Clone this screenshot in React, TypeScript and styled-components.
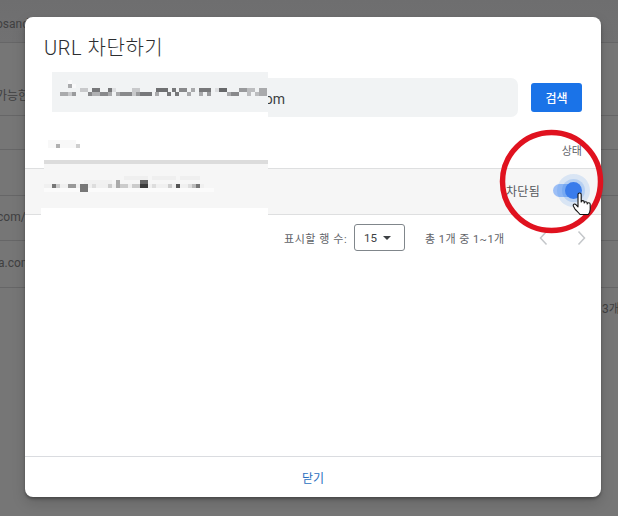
import React from "react";
import styled, { createGlobalStyle } from "styled-components";

const Global = createGlobalStyle`
  html, body { margin: 0; padding: 0; width: 618px; height: 516px; overflow: hidden; background: #767676; }
  * { box-sizing: border-box; }
  body { font-family: Roboto, "Noto Sans CJK KR", sans-serif; }
`;

const Page = styled.div`
  position: relative;
  width: 618px;
  height: 516px;
  overflow: hidden;
  background: #767676;
  display: flex;
  flex-direction: column;
`;

const BackRow = styled.div<{ $h: number; $top?: boolean; $pb?: number }>`
  height: ${(p) => p.$h}px;
  flex: none;
  border-bottom: 1px solid #666667;
  background: ${(p) => (p.$top ? "linear-gradient(#6e6e6f, #717172)" : "#767676")};
  padding-bottom: ${(p) => p.$pb ?? 9}px;
  display: flex;
  align-items: flex-end;
  color: #404041;
  font-size: 12px;
  line-height: 20px;
  white-space: nowrap;
`;

const BackText = styled.span<{ $x: number }>`
  margin-left: ${(p) => p.$x}px;
`;

const BackFoot = styled.div`
  padding: 12px 0 0 602px;
  color: #404041;
  font-size: 12px;
  line-height: 18px;
  white-space: nowrap;
`;

const Modal = styled.div`
  position: absolute;
  left: 25px;
  top: 17px;
  width: 576px;
  height: 480px;
  background: #fff;
  border-radius: 8px;
  display: flex;
  flex-direction: column;
  box-shadow: 0 2px 3px rgba(0, 0, 0, 0.3), 0 6px 14px rgba(0, 0, 0, 0.15);
`;

const Title = styled.h2`
  margin: 0;
  height: 61px;
  padding: 19px 19px 0;
  font-size: 20px;
  line-height: 24px;
  font-weight: 300;
  letter-spacing: 0.55px;
  color: #2c2d30;
  font-family: Roboto, "Noto Sans CJK KR", sans-serif;
`;

const SearchRow = styled.div`
  display: flex;
  align-items: center;
  gap: 13px;
  padding: 0 19px;
  flex: none;
`;

const SearchBox = styled.div`
  flex: 1;
  height: 39px;
  background: #f1f3f4;
  border-radius: 7px;
  display: flex;
  align-items: center;
  justify-content: flex-end;
  padding: 2px 233px 0 0;
  font-size: 14px;
  color: #3c4043;
`;

const SearchButton = styled.button`
  width: 51px;
  height: 29px;
  border: 0;
  border-radius: 3px;
  background: #1a73e8;
  color: #fff;
  font-family: inherit;
  font-size: 12px;
  font-weight: 500;
  padding: 0;
`;

const TableHead = styled.div`
  height: 52px;
  flex: none;
  display: flex;
  justify-content: flex-end;
  align-items: flex-end;
  padding: 0 19px 8px 0;
  border-bottom: 1px solid #dedfe0;
  font-size: 11px;
  line-height: 16px;
  color: #5f6368;
`;

const TableRow = styled.div`
  height: 46px;
  flex: none;
  display: flex;
  justify-content: flex-end;
  align-items: center;
  gap: 13px;
  padding: 0 20px 2px 0;
  background: #f6f6f6;
  border-bottom: 1px solid #dedfe0;
  font-size: 12px;
  color: #55585c;
`;

const StatusText = styled.span`
  letter-spacing: 0.3px;
`;

const Track = styled.div`
  position: relative;
  width: 28px;
  height: 13px;
  border-radius: 7px;
  background: #9dbff6;
`;

const Thumb = styled.div`
  position: absolute;
  left: 12px;
  top: -2px;
  width: 17px;
  height: 17px;
  border-radius: 50%;
  background: #3a7ceb;
  box-shadow: 0 0 0 3px rgba(26, 115, 232, 0.18), 0 0 0 8px rgba(26, 115, 232, 0.13);
`;

const Pager = styled.div`
  display: flex;
  align-items: center;
  height: 45px;
  padding-left: 259px;
  flex: none;
  font-size: 11px;
  color: #5f6368;
  white-space: nowrap;
`;

const PagerLabel = styled.span`
  width: 70px;
  letter-spacing: 0.55px;
`;

const RowsSelect = styled.div`
  width: 51px;
  height: 27px;
  border: 1px solid #80868b;
  border-radius: 3px;
  display: flex;
  align-items: center;
  gap: 6px;
  padding-left: 9px;
  font-size: 11.5px;
  color: #3c4043;
`;

const Caret = styled.span`
  width: 0;
  height: 0;
  border-left: 4.5px solid transparent;
  border-right: 4.5px solid transparent;
  border-top: 4.5px solid #3c4043;
`;

const Range = styled.span`
  margin-left: 20px;
  width: 112px;
  letter-spacing: 0.45px;
`;

const PageIcons = styled.div`
  display: flex;
  gap: 27px;
  color: #c4c7ca;
`;

const Spacer = styled.div`
  flex: 1;
`;

const Footer = styled.div`
  height: 41px;
  flex: none;
  border-top: 1px solid #dadce0;
  display: flex;
  align-items: center;
  justify-content: center;
  font-size: 12px;
  color: #2a6fc0;
`;

const Redaction = styled.svg`
  position: absolute;
  left: 0;
  top: 0;
  pointer-events: none;
`;

const Mark = styled.svg`
  position: absolute;
  left: 0;
  top: 0;
  overflow: visible;
  pointer-events: none;
`;

type Cell = [number, number, number, string];

const cells: Cell[] = [
  [68, 80, 4, "#f9f9fa"], [72, 84, 4, "#f9f9fa"],
  [68, 84, 4, "#aaabad"],
  [80, 88, 8, "#c8c9cb"], [92, 88, 8, "#77787a"], [108, 88, 4, "#77787a"], [112, 88, 4, "#dddee0"],
  [132, 88, 8, "#c8c9cb"], [156, 88, 12, "#6f7072"], [172, 88, 4, "#77787a"], [179, 88, 8, "#88898b"],
  [191, 88, 4, "#a9aaac"], [199, 88, 12, "#77787a"], [215, 88, 4, "#dddee0"], [219, 88, 8, "#67686a"],
  [239, 88, 8, "#999a9c"], [247, 88, 8, "#bcbdbf"], [259, 88, 8, "#a9aaac"],
  [60, 92, 8, "#a9aaac"], [68, 92, 4, "#c8c9cb"], [72, 92, 4, "#999a9c"], [88, 92, 4, "#88898b"],
  [92, 92, 8, "#b0b1b3"], [100, 92, 8, "#88898b"], [108, 92, 4, "#a9aaac"], [116, 92, 4, "#a9aaac"],
  [120, 92, 12, "#88898b"], [132, 92, 4, "#c8c9cb"], [136, 92, 4, "#999a9c"], [140, 92, 12, "#77787a"],
  [155, 92, 4, "#a9aaac"], [167, 92, 4, "#77787a"], [175, 92, 4, "#77787a"], [187, 92, 4, "#a9aaac"],
  [199, 92, 4, "#a9aaac"], [207, 92, 4, "#999a9c"], [227, 92, 4, "#a9aaac"], [231, 92, 8, "#88898b"],
  [247, 92, 4, "#bcbdbf"], [255, 92, 4, "#bcbdbf"], [259, 92, 8, "#a9aaac"],
  [48, 140, 28, "#f8f8f8"], [48, 144, 32, "#f8f8f8"], [56, 144, 4, "#b0b0b0"], [76, 144, 4, "#cfcfcf"],
  [84, 180, 28, "#f1f1f1"], [124, 176, 24, "#efefef"], [152, 176, 24, "#efefef"], [180, 176, 20, "#efefef"],
  [44, 188, 170, "#fbfbfb"],
  [116, 180, 4, "#aaaaaa"], [140, 180, 8, "#666666"],
  [44, 184, 160, "#f0f0f0"],
  [52, 184, 4, "#777777"], [56, 184, 4, "#cccccc"], [68, 184, 8, "#999999"], [80, 184, 8, "#777777"],
  [92, 184, 4, "#dddddd"], [108, 184, 4, "#cccccc"], [116, 184, 4, "#aaaaaa"], [120, 184, 8, "#cccccc"],
  [132, 184, 8, "#cccccc"], [140, 184, 8, "#3c3c3c"], [152, 184, 4, "#dddddd"], [168, 184, 4, "#cccccc"],
  [176, 184, 4, "#555555"], [188, 184, 4, "#dddddd"], [192, 184, 4, "#bbbbbb"], [196, 184, 4, "#777777"],
  [80, 188, 8, "#777777"],
];

export default function App() {
  return (
    <Page>
      <Global />
      <BackRow $h={43} $top $pb={8}><BackText $x={-4}>osand</BackText></BackRow>
      <BackRow $h={73}><BackText $x={-4}>가능한</BackText></BackRow>
      <BackRow $h={34} />
      <BackRow $h={46} />
      <BackRow $h={45} $pb={13}><BackText $x={-3}>com/</BackText></BackRow>
      <BackRow $h={47} $pb={14}><BackText $x={-2}>a.com</BackText></BackRow>
      <BackFoot>3개</BackFoot>

      <Modal>
        <Title>URL 차단하기</Title>
        <SearchRow>
          <SearchBox>.com</SearchBox>
          <SearchButton>검색</SearchButton>
        </SearchRow>
        <TableHead>상태</TableHead>
        <TableRow>
          <StatusText>차단됨</StatusText>
          <Track><Thumb /></Track>
        </TableRow>
        <Pager>
          <PagerLabel>표시할 행 수:</PagerLabel>
          <RowsSelect>15<Caret /></RowsSelect>
          <Range>총 1개 중 1~1개</Range>
          <PageIcons>
            <svg width="12" height="16" viewBox="0 0 12 16" fill="none" stroke="currentColor" strokeWidth="1.5">
              <path d="M9.5 1.5 3.5 8l6 6.5" />
            </svg>
            <svg width="12" height="16" viewBox="0 0 12 16" fill="none" stroke="currentColor" strokeWidth="1.5">
              <path d="M2.5 1.5 8.5 8l-6 6.5" />
            </svg>
          </PageIcons>
        </Pager>
        <Spacer />
        <Footer>닫기</Footer>
      </Modal>

      <Redaction width="618" height="516" shapeRendering="crispEdges">
        <rect x="41" y="112" width="227" height="48" fill="#fff" />
        <rect x="40" y="72" width="228" height="40" fill="#fff" />
        <rect x="52" y="72" width="216" height="40" fill="#f1f3f4" />
        <rect x="44" y="160" width="224" height="4" fill="#dcdcdc" />
        <rect x="44" y="164" width="224" height="44" fill="#f6f6f6" />
        <rect x="41" y="208" width="227" height="8" fill="#fff" />
        {cells.map(([x, y, w, c], i) => (
          <rect key={i} x={x} y={y} width={w} height={4} fill={c} />
        ))}
      </Redaction>

      <Mark width="618" height="516">
        <circle cx="551.5" cy="181.5" r="49" fill="none" stroke="#e0121f" strokeWidth="5.5" />
        <path
          d="M578 194.5c0-2 3.2-2 3.2 0v7.5c0-1.8 3-1.8 3 0v1c0-1.7 3-1.7 3 0v1c0-1.6 3-1.6 3 .2v5c0 2-.8 3.8-1.8 5.3H580c-1.6-2.2-3.2-3.4-5-5.4l-1.6-2.8c-.9-1.7 1.3-3 2.5-1.7l2.1 2.2z"
          fill="#fff"
          stroke="#111"
          strokeWidth="1.1"
          strokeLinejoin="round"
        />
      </Mark>
    </Page>
  );
}
